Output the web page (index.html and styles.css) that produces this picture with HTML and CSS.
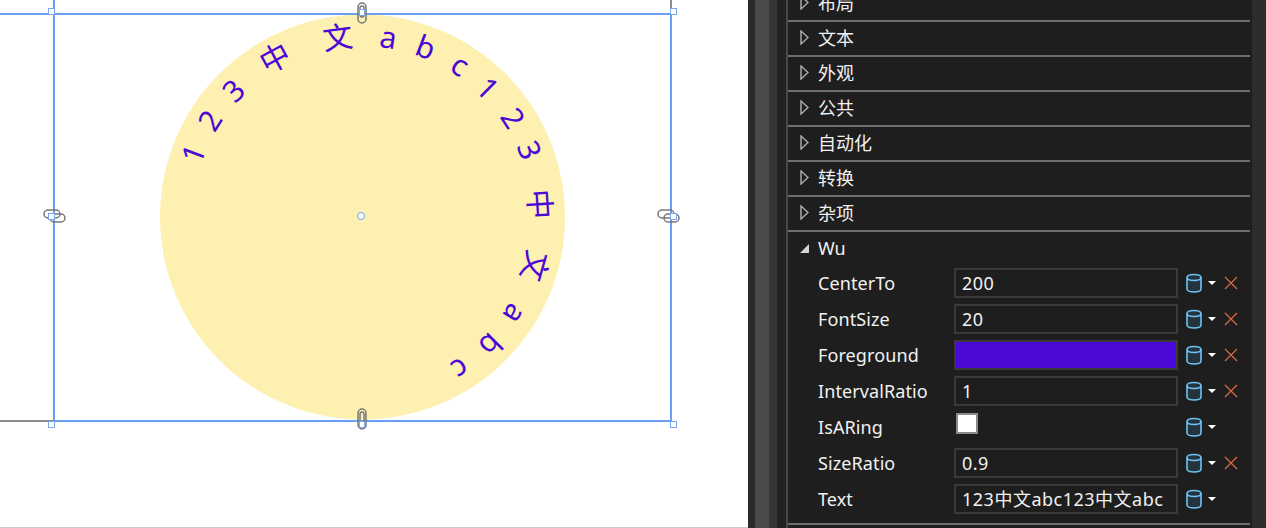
FILE: index.html
```html
<!DOCTYPE html>
<html lang="zh">
<head>
    <meta charset="UTF-8">
    <title>Wu</title>
    <link rel="stylesheet" href="styles.css">
</head>
<body>

    <div class="canvas">
        <svg class="stage" width="748" height="528" viewBox="0 0 748 528">
            <defs>
                <g id="clip-h">
                    <rect x="-10" y="-6" width="16" height="8" rx="4"></rect>
                    <rect x="-4" y="-2" width="15" height="8" rx="4"></rect>
                </g>
                <g id="clip-v">
                    <rect x="-4" y="-10" width="8" height="20" rx="4"></rect>
                    <rect x="-2" y="-7" width="4" height="11" rx="2"></rect>
                </g>
            </defs>

            <circle class="disc" cx="362.5" cy="217" r="202.5"></circle>

            <line class="edge" x1="0" y1="421" x2="53" y2="421"></line>
            <line class="edge" x1="671" y1="0" x2="671" y2="14"></line>
            <line class="foot" x1="0" y1="527.5" x2="748" y2="527.5"></line>
            <line class="sel" x1="0" y1="14" x2="672" y2="14"></line>
            <line class="sel" x1="54" y1="0" x2="54" y2="422"></line>
            <line class="sel" x1="671" y1="14" x2="671" y2="422"></line>
            <line class="sel" x1="53" y1="421" x2="672" y2="421"></line>

            <g class="ring">
                <text transform="translate(361 216) rotate(-69.6)" y="-168">1</text>
                <text transform="translate(361 216) rotate(-57.7)" y="-168">2</text>
                <text transform="translate(361 216) rotate(-45.4)" y="-168">3</text>
                <text transform="translate(361 216) rotate(-28.6)" y="-169">中</text>
                <text transform="translate(361 216) rotate(-7.4)" y="-169">文</text>
                <text transform="translate(361 216) rotate(8.7)" y="-170">a</text>
                <text transform="translate(361 216) rotate(21)" y="-170">b</text>
                <text transform="translate(361 216) rotate(33.3)" y="-170">c</text>
                <text transform="translate(361 216) rotate(44.8)" y="-169">1</text>
                <text transform="translate(361 216) rotate(57.2)" y="-170">2</text>
                <text transform="translate(361 216) rotate(68.6)" y="-170">3</text>
                <text transform="translate(361 216) rotate(86.2)" y="-168">中</text>
                <text transform="translate(361 216) rotate(106)" y="-170">文</text>
                <text transform="translate(361 216) rotate(122.5)" y="-172">a</text>
                <text transform="translate(361 216) rotate(134.8)" y="-172">b</text>
                <text transform="translate(361 216) rotate(147)" y="-172">c</text>
            </g>

            <use class="clip" href="#clip-v" x="362" y="13"></use>
            <use class="clip" href="#clip-v" x="362" y="419"></use>
            <use class="clip" href="#clip-h" x="54" y="216"></use>
            <use class="clip" href="#clip-h" x="668" y="216"></use>

            <rect class="grip" x="48.5" y="8.5" width="6" height="6"></rect>
            <rect class="grip" x="670.5" y="8.5" width="6" height="6"></rect>
            <rect class="grip" x="48.5" y="421.5" width="6" height="6"></rect>
            <rect class="grip" x="670.5" y="421.5" width="6" height="6"></rect>
            <rect class="grip" x="359.5" y="9.5" width="5" height="6"></rect>
            <rect class="grip" x="359.5" y="421.5" width="5" height="6"></rect>
            <rect class="grip" x="48.5" y="213.5" width="6" height="6"></rect>
            <rect class="grip" x="670.5" y="213.5" width="6" height="6"></rect>
            <circle class="pivot" cx="361" cy="216" r="3.5"></circle>
        </svg>
    </div>

    <div class="rail rail-a"></div>
    <div class="rail rail-b"></div>
    <div class="rail rail-c"></div>
    <div class="rail rail-d"></div>

    <div class="panel">
        <div class="section first"><svg class="arrow" width="9" height="15"><path d="M1 1L8 7.5L1 14Z"></path></svg><span class="name">布局</span></div>
        <div class="section"><svg class="arrow" width="9" height="15"><path d="M1 1L8 7.5L1 14Z"></path></svg><span class="name">文本</span></div>
        <div class="section"><svg class="arrow" width="9" height="15"><path d="M1 1L8 7.5L1 14Z"></path></svg><span class="name">外观</span></div>
        <div class="section"><svg class="arrow" width="9" height="15"><path d="M1 1L8 7.5L1 14Z"></path></svg><span class="name">公共</span></div>
        <div class="section"><svg class="arrow" width="9" height="15"><path d="M1 1L8 7.5L1 14Z"></path></svg><span class="name">自动化</span></div>
        <div class="section"><svg class="arrow" width="9" height="15"><path d="M1 1L8 7.5L1 14Z"></path></svg><span class="name">转换</span></div>
        <div class="section"><svg class="arrow" width="9" height="15"><path d="M1 1L8 7.5L1 14Z"></path></svg><span class="name">杂项</span></div>

        <div class="group">
            <div class="group-head"><svg class="arrow-open" width="9" height="15"><path d="M9 3V12H0Z"></path></svg><span class="name-wu">Wu</span></div>

            <div class="row">
                <span class="label">CenterTo</span>
                <span class="field">200</span>
                <svg class="bind" width="16" height="20"><use href="#can"></use></svg>
                <span class="caret"></span>
                <svg class="clear" width="14" height="14"><path d="M1 1L13 13M13 1L1 13"></path></svg>
            </div>
            <div class="row">
                <span class="label">FontSize</span>
                <span class="field">20</span>
                <svg class="bind" width="16" height="20"><use href="#can"></use></svg>
                <span class="caret"></span>
                <svg class="clear" width="14" height="14"><path d="M1 1L13 13M13 1L1 13"></path></svg>
            </div>
            <div class="row">
                <span class="label">Foreground</span>
                <span class="field swatch"></span>
                <svg class="bind" width="16" height="20"><use href="#can"></use></svg>
                <span class="caret"></span>
                <svg class="clear" width="14" height="14"><path d="M1 1L13 13M13 1L1 13"></path></svg>
            </div>
            <div class="row">
                <span class="label">IntervalRatio</span>
                <span class="field">1</span>
                <svg class="bind" width="16" height="20"><use href="#can"></use></svg>
                <span class="caret"></span>
                <svg class="clear" width="14" height="14"><path d="M1 1L13 13M13 1L1 13"></path></svg>
            </div>
            <div class="row">
                <span class="label">IsARing</span>
                <span class="field-plain"><span class="check"></span></span>
                <svg class="bind" width="16" height="20"><use href="#can"></use></svg>
                <span class="caret"></span>
            </div>
            <div class="row">
                <span class="label">SizeRatio</span>
                <span class="field">0.9</span>
                <svg class="bind" width="16" height="20"><use href="#can"></use></svg>
                <span class="caret"></span>
                <svg class="clear" width="14" height="14"><path d="M1 1L13 13M13 1L1 13"></path></svg>
            </div>
            <div class="row">
                <span class="label">Text</span>
                <span class="field">123中文abc123中文abc</span>
                <svg class="bind" width="16" height="20"><use href="#can"></use></svg>
                <span class="caret"></span>
            </div>
        </div>
    </div>

    <div class="rail rail-end"></div>

    <svg class="defs" width="0" height="0">
        <defs>
            <g id="can">
                <path class="can-body" d="M1 4.5C1 0.5 15 0.5 15 4.5V16C15 20 1 20 1 16Z"></path>
                <path class="can-lid" d="M1 4.5C1 8.5 15 8.5 15 4.5"></path>
            </g>
        </defs>
    </svg>

</body>
</html>
```

FILE: styles.css
```css
html, body {
    margin: 0;
    padding: 0;
    height: 100%;
    overflow: hidden;
}
body {
    display: flex;
    width: 1266px;
    height: 528px;
    background-color: #2d2d2d;
    font-family: "Noto Sans", "Noto Sans CJK SC", sans-serif;
    font-size: 18px;
    color: #f1f1f1;
}

/* designer surface */
.canvas {
    width: 748px;
    height: 528px;
    flex: none;
    background-color: #fff;
}
.stage {
    display: block;
}
.disc {
    fill: #fdf0b1;
}
.edge {
    stroke: #8c8c8c;
    stroke-width: 2;
}
.foot {
    stroke: #ccc;
    stroke-width: 1;
}
.sel {
    stroke: #6a9ef0;
    stroke-width: 2;
}
.ring text {
    fill: #4b08d6;
    font-family: "Noto Sans", "Noto Sans CJK SC", sans-serif;
    font-size: 30px;
    text-anchor: middle;
}
.clip {
    fill: none;
    stroke: #777;
    stroke-width: 1.5;
}
.grip {
    fill: #fff;
    stroke: #7aa7f0;
    stroke-width: 1;
}
.pivot {
    fill: #fff;
    stroke: #6a9ef0;
    stroke-width: 1;
}

/* strips between the surface and the panel */
.rail {
    flex: none;
    height: 528px;
}
.rail-a {
    width: 7px;
    background-color: #2a2a2a;
}
.rail-b {
    width: 14px;
    background-color: #4a4a4a;
}
.rail-c {
    width: 8px;
    background-color: #363636;
}
.rail-d {
    width: 9px;
    background-color: #222;
    border-right: 2px solid #484848;
}
.rail-end {
    flex: 1;
    background-color: #2d2d2d;
}

/* properties */
.panel {
    width: 462px;
    flex: none;
    background-color: #1e1e1e;
    padding-right: 2px;
}
.section {
    display: flex;
    align-items: center;
    height: 33px;
    padding-left: 12px;
    border-bottom: 2px solid #6e6e6e;
}
.section.first {
    margin-top: -13px;
}
.name {
    margin-top: -3px;
}
.name-wu {
    margin-top: -2px;
}
.arrow {
    margin-right: 9px;
    flex: none;
    margin-top: -2px;
}
.arrow path {
    fill: none;
    stroke: #a9a9a9;
    stroke-width: 1.5;
}
.arrow-open {
    margin-right: 9px;
    flex: none;
}
.arrow-open path {
    fill: #d8d4d4;
}
.group {
    padding-bottom: 6px;
    border-bottom: 2px solid #6e6e6e;
}
.group-head {
    display: flex;
    align-items: center;
    height: 33px;
    padding-left: 12px;
}
.row {
    display: flex;
    align-items: center;
    height: 36px;
    padding-left: 30px;
}
.label {
    width: 136px;
    flex: none;
    letter-spacing: 0.1px;
}
.field {
    box-sizing: border-box;
    width: 224px;
    height: 30px;
    line-height: 26px;
    flex: none;
    padding-left: 6px;
    border: 2px solid #3a3a3a;
    letter-spacing: 0.5px;
    white-space: nowrap;
    overflow: hidden;
}
.field-plain {
    width: 224px;
    height: 30px;
    flex: none;
}
.swatch {
    background-color: #4b08d6;
}
.check {
    display: block;
    box-sizing: border-box;
    width: 22px;
    height: 21px;
    margin: 1px 0 0 2px;
    background-color: #fff;
    border: 2px solid #8a8a8a;
}
.bind {
    margin-left: 8px;
    flex: none;
}
.can-body {
    fill: #25343c;
    stroke: #6cc4f5;
    stroke-width: 1.6;
}
.can-lid {
    fill: none;
    stroke: #6cc4f5;
    stroke-width: 1.6;
}
.caret {
    width: 0;
    height: 0;
    margin-left: 6px;
    flex: none;
    border-left: 4px solid transparent;
    border-right: 4px solid transparent;
    border-top: 4px solid #fff;
}
.clear {
    margin-left: 8px;
    flex: none;
}
.clear path {
    fill: none;
    stroke: #d9663f;
    stroke-width: 1.3;
}
.defs {
    position: absolute;
}
```
